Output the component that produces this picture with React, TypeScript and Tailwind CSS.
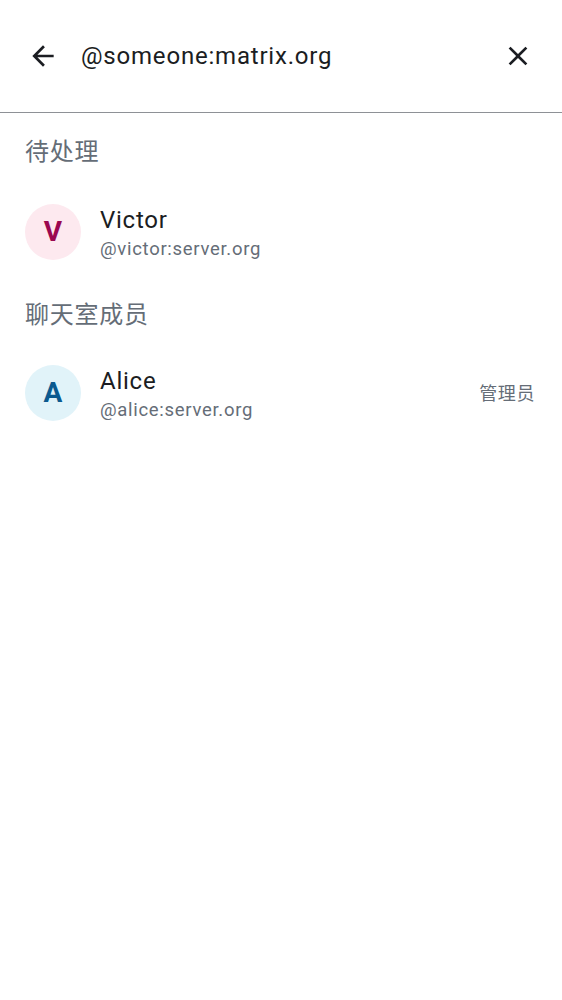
import React from "react";

const font = { fontFamily: 'Roboto, "Noto Sans CJK SC", sans-serif' };

function Avatar({ letter, bg, fg }: { letter: string; bg: string; fg: string }) {
  return (
    <div className={`w-[56px] h-[56px] rounded-full flex items-center justify-center shrink-0 ${bg}`}>
      <span className={`text-[28px] font-bold leading-none ${fg}`}>{letter}</span>
    </div>
  );
}

function Member({
  letter,
  name,
  id,
  bg,
  fg,
  role,
}: {
  letter: string;
  name: string;
  id: string;
  bg: string;
  fg: string;
  role?: string;
}) {
  return (
    <div className="flex items-center h-[88px] pl-[25px] pr-[27px]">
      <Avatar letter={letter} bg={bg} fg={fg} />
      <div className="flex flex-col ml-[19px] mt-[3px] flex-1">
        <span className="text-[24px] leading-[28px] tracking-[0.75px] text-[#1b1d22]">{name}</span>
        <span className="mt-[3px] text-[18.5px] leading-[24px] text-[#656d77] tracking-[0.7px]">{id}</span>
      </div>
      {role && <span className="text-[18px] tracking-[0.6px] text-[#656d77]">{role}</span>}
    </div>
  );
}

export default function App() {
  return (
    <div className="w-[562px] h-[1000px] bg-white" style={font}>
      <div className="h-[113px] flex items-center pl-[27px] pr-[28px] border-b border-[#8e9196]">
        <svg width="32" height="32" viewBox="0 0 24 24" fill="#1b1d22">
          <path d="M20 11H7.83l5.59-5.59L12 4l-8 8 8 8 1.41-1.41L7.83 13H20v-2z" />
        </svg>
        <span className="ml-[22px] flex-1 text-[24px] tracking-[0.8px] text-[#1b1d22]">@someone:matrix.org</span>
        <svg width="32" height="32" viewBox="0 0 24 24" fill="#1b1d22">
          <path d="M19 6.41L17.59 5 12 10.59 6.41 5 5 6.41 10.59 12 5 17.59 6.41 19 12 13.41 17.59 19 19 17.59 13.41 12z" />
        </svg>
      </div>
      <div className="pl-[25px] pt-[24px] pb-[21px] text-[24px] leading-[30px] tracking-[0.75px] text-[#656d77]">待处理</div>
      <Member letter="V" name="Victor" id="@victor:server.org" bg="bg-[#fde9ef]" fg="text-[#9b0850]" />
      <div className="pl-[25px] pt-[24px] pb-[19px] text-[24px] leading-[30px] tracking-[0.75px] text-[#656d77]">聊天室成员</div>
      <Member letter="A" name="Alice" id="@alice:server.org" bg="bg-[#e1f3f9]" fg="text-[#0b5a8f]" role="管理员" />
    </div>
  );
}
